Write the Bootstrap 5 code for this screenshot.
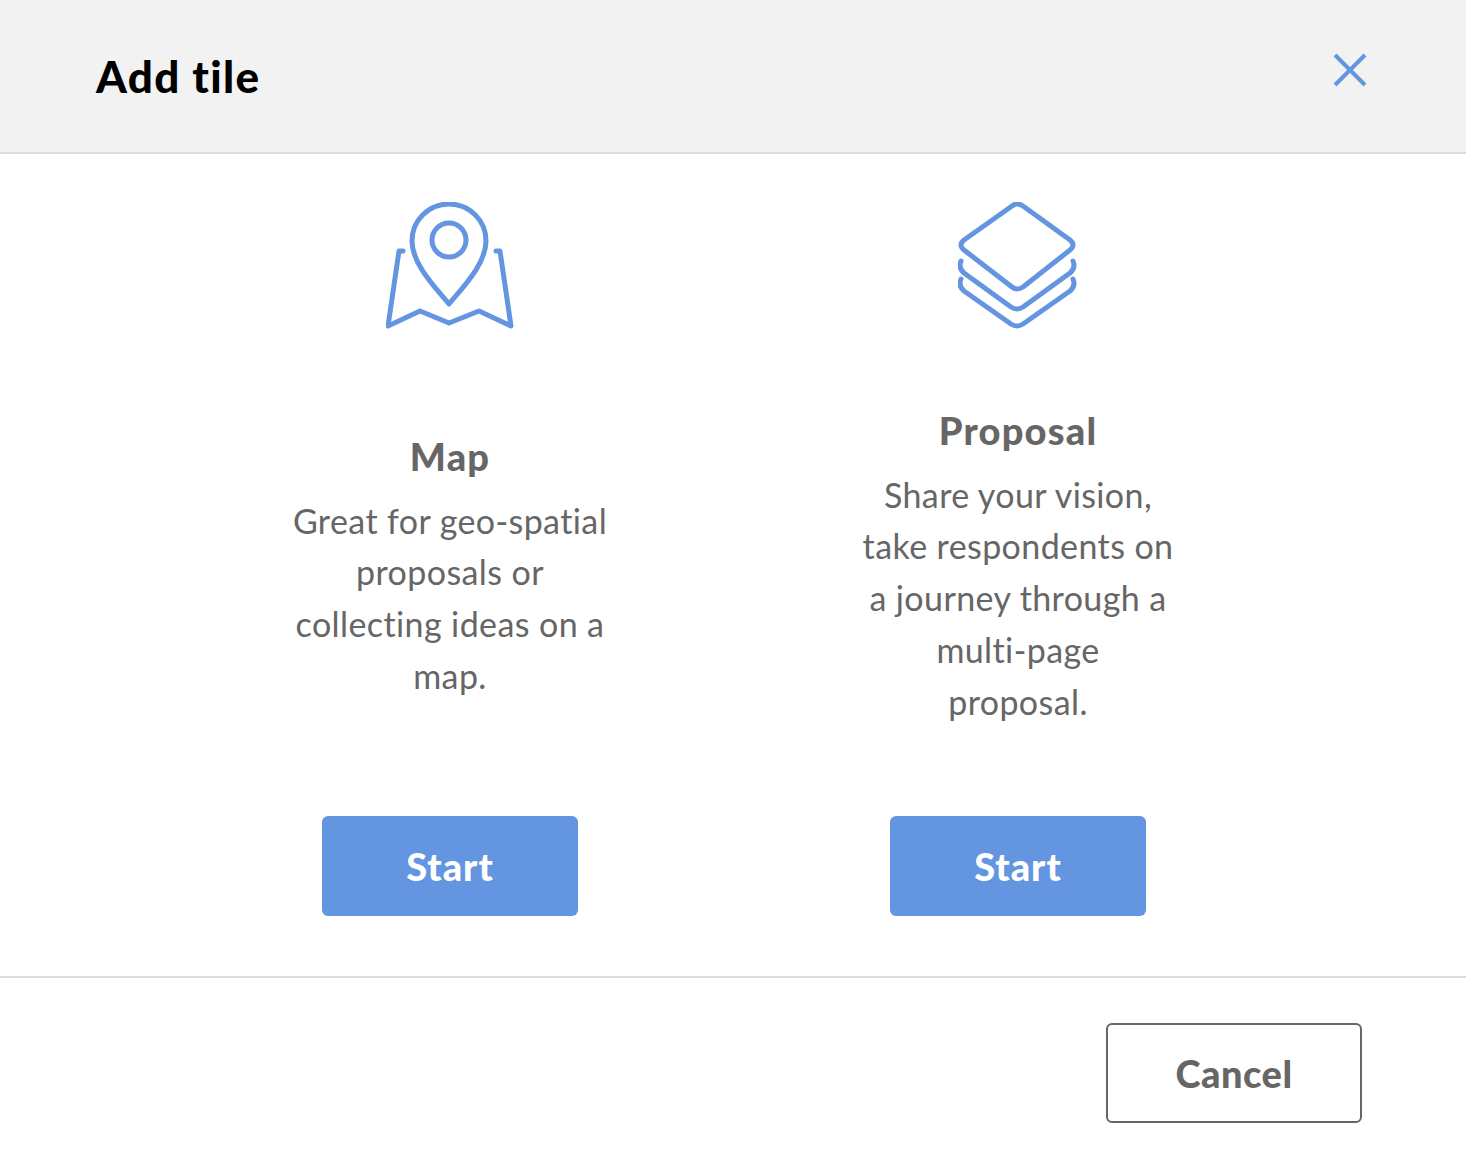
<!DOCTYPE html>
<html lang="en">

<head>
  <meta charset="UTF-8">
  <meta name="viewport" content="width=device-width, initial-scale=1.0">
  <title>Add tile</title>
  <link href="https://cdn.jsdelivr.net/npm/bootstrap@5.3.0/dist/css/bootstrap.min.css" rel="stylesheet">
  <style>
    body { font-family: "Lato", "Open Sans", sans-serif; color: #666; background: #fff; font-variant-ligatures: none; }
    .tile-header { height: 154px; padding: 0 96px 0 96px; background: #f2f2f2; border-bottom: 2px solid #ddd; }
    .tile-title { margin: 0; font-size: 44px; font-weight: 900; color: #000; line-height: 48px; letter-spacing: 1.3px; }
    .tile-close { padding: 0; border: 0; background: none; line-height: 0; margin: 0 3px 13px 0; }
    .tile-body { height: 824px; border-bottom: 2px solid #ddd; padding: 48px 164px 60px 166px; }
    .tile-col { width: 568px; }
    .tile-icon { height: 127px; }
    .tile-text { text-align: center; padding-bottom: 12px; }
    .tile-name { margin: 0 0 15px; font-size: 38px; font-weight: 900; line-height: 48px; color: #666; letter-spacing: 1.2px; }
    .tile-desc { margin: 0; font-size: 34px; line-height: 51.7px; letter-spacing: .4px; }
    .tile-start { width: 256px; height: 100px; border: 0; border-radius: 6px; background: #6495e0; color: #fff; font-size: 38px; font-weight: 900; letter-spacing: 1px; }
    .tile-start:hover { background: #5586d2; color: #fff; }
    .tile-footer { padding: 45px 104px 0 0; }
    .tile-cancel { width: 256px; height: 100px; border: 2px solid #666; border-radius: 6px; background: #fff; color: #666; font-size: 38px; font-weight: 900; letter-spacing: .5px; }
  </style>
</head>

<body>
  <div class="tile-header d-flex justify-content-between align-items-center">
    <h1 class="tile-title">Add tile</h1>
    <button type="button" class="tile-close" aria-label="Close">
      <svg width="34" height="34" viewBox="0 0 34 34" fill="none" stroke="#6495e0" stroke-width="4">
        <path d="M2 2 32 32M32 2 2 32" />
      </svg>
    </button>
  </div>

  <div class="tile-body d-flex">
    <div class="tile-col d-flex flex-column align-items-center">
      <div class="tile-icon">
        <svg width="128" height="127" viewBox="0 0 128 127" fill="none" stroke="#6495e0" stroke-width="5" stroke-linecap="round" stroke-linejoin="round">
          <path d="M63 102C47 83 26 61 26 39A37 37 0 0 1 100 39C100 61 79 83 63 102Z" />
          <circle cx="63" cy="38" r="17" />
          <path d="M17 49H13L2 124 34 109 63 121 93 109 125 124 114 49H110" />
        </svg>
      </div>
      <div class="tile-text flex-grow-1 d-flex flex-column justify-content-center">
        <h2 class="tile-name">Map</h2>
        <p class="tile-desc">Great for geo-spatial<br>proposals or<br>collecting ideas on a<br>map.</p>
      </div>
      <button type="button" class="tile-start">Start</button>
    </div>
    <div class="tile-col d-flex flex-column align-items-center">
      <div class="tile-icon">
        <svg width="120" height="127" viewBox="0 0 120 127" fill="none" stroke="#6495e0" stroke-width="5" stroke-linecap="round" stroke-linejoin="round">
          <path d="M54 4Q59 0 65 4L112 38Q118 43 112 48L65 85Q59 89 54 85L6 48Q0 43 6 38Z" />
          <path d="M3 59Q0 66 6 71L53 105Q59 109 65 105L112 71Q118 66 115 59" />
          <path d="M3 77Q0 84 6 89L53 122Q59 126 65 122L112 89Q118 84 115 77" />
        </svg>
      </div>
      <div class="tile-text flex-grow-1 d-flex flex-column justify-content-center">
        <h2 class="tile-name">Proposal</h2>
        <p class="tile-desc">Share your vision,<br>take respondents on<br>a journey through a<br>multi-page<br>proposal.</p>
      </div>
      <button type="button" class="tile-start">Start</button>
    </div>
  </div>

  <div class="tile-footer d-flex justify-content-end">
    <button type="button" class="tile-cancel">Cancel</button>
  </div>

  <script src="https://cdn.jsdelivr.net/npm/bootstrap@5.3.0/dist/js/bootstrap.bundle.min.js"></script>
</body>

</html>
